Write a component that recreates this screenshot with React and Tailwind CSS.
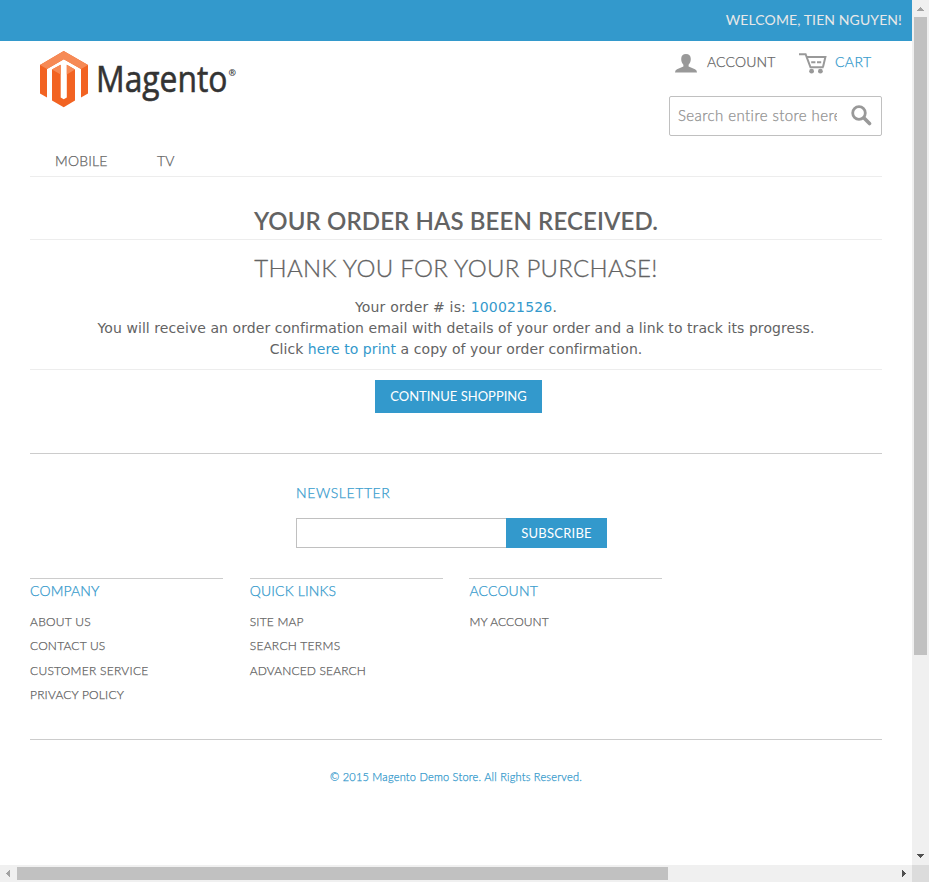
const LINKS = [
  {
    title: "COMPANY",
    track: "tracking-[0.14px]",
    items: [
      ["ABOUT US", "tracking-[0.3px]"],
      ["CONTACT US", "tracking-[0.2px]"],
      ["CUSTOMER SERVICE", "tracking-[0.27px]"],
      ["PRIVACY POLICY", "tracking-[0.2px]"],
    ],
  },
  {
    title: "QUICK LINKS",
    track: "tracking-[0.15px]",
    items: [
      ["SITE MAP", "tracking-[0.2px]"],
      ["SEARCH TERMS", "tracking-[0.3px]"],
      ["ADVANCED SEARCH", "tracking-[0.15px]"],
    ],
  },
  { title: "ACCOUNT", track: "tracking-[0.15px]", items: [["MY ACCOUNT", "tracking-[0.12px]"]] },
];

function Logo() {
  return (
    <svg width="210" height="66" viewBox="30 45 210 66" className="block overflow-visible">
      <path fill="#f26322" d="M40 65L63.7 51L88 65V93.5L81 97.6V69L63.8 59.3L47 69V97.6L40 93.5Z" />
      <path fill="#f68a56" d="M40 65L63.7 51L88 65L81 69L63.8 59.3L47 69Z" />
      <path fill="#f26322" d="M52 69.5L60.7 64.8V97.5L63.7 99.2L66.8 97.5V64.8L75 69.5V100.5L63.7 107.2L52 100.5Z" />
      <path fill="#f68a56" d="M66.8 64.8L75 69.5L66.8 74.5ZM52 69.5L60.7 64.8V74.5Z" />
      <text x="96" y="92.3" fontFamily="'Open Sans', sans-serif" fontSize="36" fill="#333" stroke="#333" strokeWidth="0.6" textLength="131.5" lengthAdjust="spacingAndGlyphs">Magento</text>
      <text x="228.6" y="76" fontFamily="'Open Sans', sans-serif" fontSize="9" fontWeight="700" fill="#333">®</text>
    </svg>
  );
}

function CartIcon() {
  return (
    <svg width="28" height="21" viewBox="0 0 28 21" className="block" fill="none" stroke="#999">
      <path strokeWidth="2" d="M0 1.2H6.6L11.5 14.3H24.6" />
      <path strokeWidth="2" d="M7.5 4H26.4L24 14" />
      <path strokeWidth="2" strokeDasharray="4.2 1.6" d="M12.2 9.2H22.2" />
      <circle cx="12.6" cy="18.2" r="2.4" fill="#999" stroke="none" />
      <circle cx="21.4" cy="18.2" r="2.4" fill="#999" stroke="none" />
    </svg>
  );
}

function Header() {
  return (
    <header className="flex h-[106px] justify-between">
      <div className="pt-1"><Logo /></div>
      <div className="flex w-[213px] flex-col">
        <div className="flex h-[55px] pl-1.5 pt-3 text-[14px] font-light leading-[18px] tracking-[0.15px] [-webkit-text-stroke:0.25px]">
          <svg width="22" height="19" viewBox="0 0 22 19" className="mt-px block shrink-0" fill="#999">
            <path d="M11 0C14 0 15.8 1.8 15.8 5C15.8 8 14.6 9.6 13.6 10.8V12.6L20 15.3Q22 16.3 22 18.5H0Q0 16.3 2 15.3L8.4 12.6V10.8C7.4 9.6 6.2 8 6.2 5C6.2 1.8 8 0 11 0Z" />
          </svg>
          <span className="ml-2.5 w-[92px] whitespace-nowrap">ACCOUNT</span>
          <div className="shrink-0"><CartIcon /></div>
          <span className="ml-2 whitespace-nowrap tracking-[0.4px] text-[#3399cc]">CART</span>
        </div>
        <div className="flex h-10 items-center justify-between rounded-[2px] border border-[#c0c0c0] pb-0.5 pl-2 pr-[9px]">
          <span className="w-[159px] overflow-hidden whitespace-nowrap text-[15px] font-light leading-5 tracking-[0.42px] text-[#909090] [-webkit-text-stroke:0.25px]">Search entire store here...</span>
          <svg width="21" height="21" viewBox="0 0 21 21" className="block" fill="none" stroke="#999">
            <circle cx="8" cy="8" r="6.3" strokeWidth="2.8" />
            <path strokeWidth="3.6" strokeLinecap="round" d="M13 13L18.5 18.5" />
          </svg>
        </div>
      </div>
    </header>
  );
}

function Confirmation() {
  return (
    <main className="text-center">
      <h1 className="h-[63px] border-b border-[#ededed] pt-[29px] text-2xl font-semibold leading-[30px] tracking-[0.1px]">YOUR ORDER HAS BEEN RECEIVED.</h1>
      <h2 className="h-[57px] pt-[13px] text-2xl font-light leading-[30px] tracking-[0.28px] [-webkit-text-stroke:0.3px]">THANK YOU FOR YOUR PURCHASE!</h2>
      <div className="h-[73px] border-b border-[#ededed] font-['DejaVu_Sans',Verdana,sans-serif] text-[14px] leading-[21px] tracking-[0.065px]">
        <p className="tracking-[0.18px]">Your order # is: <a className="text-[#3399cc]">100021526</a>.</p>
        <p>You will receive an order confirmation email with details of your order and a link to track its progress.</p>
        <p>Click <a className="text-[#3399cc]">here to print</a> a copy of your order confirmation.</p>
      </div>
      <div className="flex h-[83px] justify-center pl-[5px] pt-[10px]">
        <button className="h-[33px] w-[167px] whitespace-nowrap bg-[#3399cc] text-[13px] leading-[33px] text-white">CONTINUE SHOPPING</button>
      </div>
    </main>
  );
}

function Footer() {
  return (
    <footer className="border-t border-[#cccccc]">
      <div className="h-[124px] pl-[266px] pt-[29px]">
        <h3 className="h-[35px] text-[14px] font-light leading-5 tracking-[0.6px] text-[#3399cc] [-webkit-text-stroke:0.25px]">NEWSLETTER</h3>
        <div className="flex h-[30px]">
          <div className="w-[210px] border border-r-0 border-[#c0c0c0]" />
          <button className="w-[101px] bg-[#3399cc] text-[13px] leading-[30px] tracking-[0.25px] text-white">SUBSCRIBE</button>
        </div>
      </div>
      <div className="flex h-[161px] gap-[26.7px]">
        {LINKS.map((c) => (
          <section key={c.title} className="w-[193px] border-t border-[#cccccc] pt-[2px] font-light [-webkit-text-stroke:0.25px]">
            <h3 className={"h-[28.5px] text-[14px] leading-5 text-[#3399cc] " + c.track}>{c.title}</h3>
            <ul>
              {c.items.map(([label, track]) => (
                <li key={label} className={"h-[24.6px] text-[12px] leading-[24.6px] " + track}>{label}</li>
              ))}
            </ul>
          </section>
        ))}
      </div>
      <div className="border-t border-[#cccccc] pt-[29px] text-center text-[11px] font-light leading-4 tracking-[0.23px] text-[#3399cc] [-webkit-text-stroke:0.25px]">© 2015 Magento Demo Store. All Rights Reserved.</div>
    </footer>
  );
}

function Arrow({ d, fill }) {
  return (
    <svg width="17" height="17" viewBox="0 0 17 17" className="block shrink-0" shapeRendering="crispEdges"><path fill={fill} d={d} /></svg>
  );
}

export default function App() {
  return (
    <div className="flex h-[882px] w-[929px] flex-col overflow-hidden bg-white font-[Lato,'Open_Sans',sans-serif] text-[#636363]">
      <div className="flex h-[865px]">
        <div className="w-[912px]">
          <div className="h-[41px] bg-[#3399cc] pr-2.5 pt-[9px] text-right text-[14px] leading-[22px] tracking-[0.1px] text-[#e8e8e8]">WELCOME, TIEN NGUYEN!</div>
          <div className="px-[30px]">
            <Header />
            <nav className="flex h-[30px] border-b border-[#ededed] pl-[25px] pt-1 text-[14px] font-light leading-5 tracking-[0.2px] [-webkit-text-stroke:0.25px]">
              <span className="w-[102px]">MOBILE</span>
              <span>TV</span>
            </nav>
            <Confirmation />
            <Footer />
          </div>
        </div>
        <div className="flex w-[17px] flex-col items-center bg-[#f0f0f0]">
          <Arrow fill="#a3a3a3" d="M5 11L8.5 7L12 11Z" />
          <div className="h-[638px] w-[13px] bg-[#c1c1c1]" />
          <div className="mt-auto"><Arrow fill="#505050" d="M5 6L8.5 10L12 6Z" /></div>
        </div>
      </div>
      <div className="flex h-[17px] items-center bg-[#f0f0f0]">
        <Arrow fill="#a3a3a3" d="M10 5L6 8.5L10 12Z" />
        <div className="h-[13px] w-[651px] bg-[#c1c1c1]" />
        <div className="ml-auto"><Arrow fill="#505050" d="M7 5L11 8.5L7 12Z" /></div>
        <div className="size-[17px] bg-[#dcdcdc]" />
      </div>
    </div>
  );
}
